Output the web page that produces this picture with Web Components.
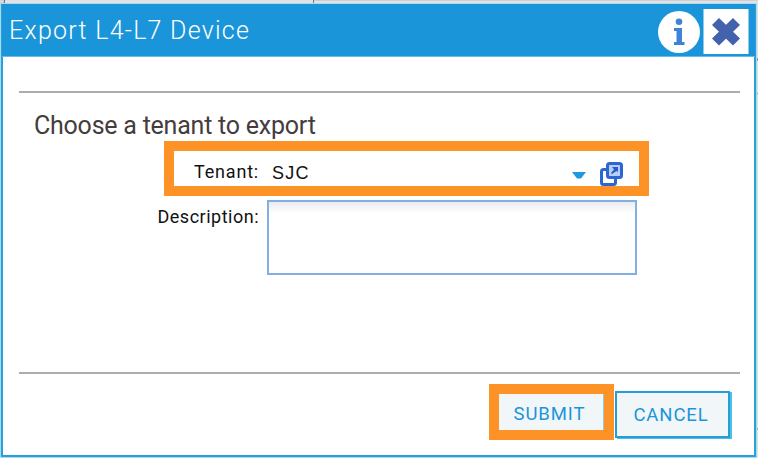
<!DOCTYPE html>
<html lang="en"><head><meta charset="utf-8"><title>Export L4-L7 Device</title>
<style>
html,body{margin:0;width:758px;height:458px;overflow:hidden;background:#e2e2e2;font-family:Roboto,"Liberation Sans",sans-serif}
</style></head><body>
<page-backdrop>
<export-dialog>
  <dialog-header slot="header">Export L4-L7 Device</dialog-header>
  <section-title>Choose a tenant to export</section-title>
  <tenant-field label="Tenant:">SJC</tenant-field>
  <description-field>Description:</description-field>
  <highlight-box slot="actions"><action-button>SUBMIT</action-button></highlight-box>
  <action-button slot="actions" raised>CANCEL</action-button>
</export-dialog>
</page-backdrop>
<script>
const define=(name,html)=>customElements.define(name,class extends HTMLElement{
  constructor(){super();this.attachShadow({mode:'open'}).innerHTML=html;
    const l=this.shadowRoot.querySelector('[data-label]');if(l)l.textContent=this.getAttribute('label');}
});
define('page-backdrop',`<style>
:host{display:block;position:relative;box-sizing:border-box;width:758px;height:458px;padding:4px 2px 1px 1px;background:#e2e2e2}
svg{position:absolute;inset:0}slot{position:relative}::slotted(*){position:relative}
</style><svg width="758" height="458"><path d="M0 0H4V3H0M314 0H758" fill="none" stroke="#bcbcbc"/><path d="M4.5 0V4M313.5 0V4" stroke="#777" /><path d="M0 38.5H2M0 182H2M757 59.5H758" stroke="#777" stroke-width="2"/><path d="M0 333H2M0 375H2M0 416H2M757 93.5H758M757 429H758" stroke="#79bde0" stroke-width="2"/><path d="M313 457.500h2m13 0h2m13 0h2m4 0h2m36 0h2" stroke="#888"/></svg><slot></slot>`);
define('export-dialog',`<style>
:host{display:flex;flex-direction:column;box-sizing:border-box;width:755px;height:453px;background:#fff;border:solid #2a9fd9;border-width:0 2px 2px;box-shadow:0 0 0 1px #a5dcf3}
.body{box-sizing:border-box;height:283px;margin:34px 14px 0 16px;border-top:2px solid #adacb0;border-bottom:2px solid #adacb0;padding-top:18px}
.foot{display:flex;align-items:flex-start;justify-content:flex-end;padding:10px 24px 0 0;gap:1px}
</style><slot name="header"></slot><div class="body"><slot></slot></div><div class="foot"><slot name="actions"></slot></div>`);
define('dialog-header',`<style>
:host{display:flex;flex:none;box-sizing:border-box;height:53px;margin:0 -1px;background:#1b95d9;border-bottom:1px solid #65bce8;color:#fff;padding:4px 6px 0 7px;justify-content:space-between}
.t{font-size:25px;line-height:46px;font-weight:300;letter-spacing:1.25px;white-space:nowrap}.icons{display:flex;gap:3px}
</style><span class="t"><slot></slot></span><div class="icons"><svg width="43" height="46"><circle cx="22" cy="24" r="21" fill="#fff"/><circle cx="22" cy="13.700" r="3.300" fill="#3e83d6"/><path d="M17 20H25V34H27.500V37H17V34H19.500V23H17Z" fill="#3e83d6"/></svg><svg width="46" height="46"><path d="M.5 1H45.500V46H.5Z" fill="#fff"/><path d="M12.500 13.500L33.500 34M33.500 13.500L12.500 34" stroke="#4262ad" stroke-width="10"/></svg></div>`);
define('section-title',`<style>:host{display:block;height:30px;padding-left:15px;font-size:25px;line-height:30px;color:#453c3d;letter-spacing:-.23px;white-space:nowrap}</style><slot></slot>`);
define('tenant-field',`<style>
:host{display:grid;grid-template-columns:87px 1fr 14px 37px;box-sizing:border-box;width:485px;height:55px;margin-left:145px;border:10px solid #fd9327;padding-right:16px;color:#111;font-size:18px;line-height:20px;white-space:nowrap}
.l{justify-self:end;margin:11px 2px 0 0;letter-spacing:.8px}.v{margin:12px 0 0 11px;font-family:"Liberation Sans",sans-serif;letter-spacing:1.3px}
svg:last-child{justify-self:end}
</style><span class="l" data-label></span><span class="v"><slot></slot></span><svg width="14" height="34"><path d="M0 21H14L9 27.500H5Z" fill="#1c9add"/></svg><svg width="23" height="35"><rect x="1.500" y="18.500" width="14" height="15" rx="2" fill="#fff" stroke="#2b66d4" stroke-width="3"/><rect x="7.500" y="12.500" width="14" height="14" rx="2" fill="#b7cef7" stroke="#2b66d4" stroke-width="3"/><path d="M12 16H18V21L16.500 20L12 23L11 22L14 18.500Z" fill="#285cc8"/></svg>`);
define('description-field',`<style>
:host{display:grid;grid-template-columns:240px 370px;column-gap:8px;color:#111;font-size:18px;line-height:20px;margin-top:4px}
span{justify-self:end;margin-top:7px;letter-spacing:.5px}div{box-sizing:border-box;height:75px;border:2px solid #82b0e0;background:linear-gradient(#e9ecf2,#fff 11px)}
</style><span><slot></slot></span><div></div>`);
define('highlight-box',`<style>:host{display:block;box-sizing:border-box;width:125px;height:56px;border:10px solid #fd9327}</style><slot></slot>`);
define('action-button',`<style>
:host{display:flex;align-items:center;justify-content:center;box-sizing:border-box;height:36px;background:#f1f6f9;color:#1b95d9;border-right:1px solid #8bcdec;font-size:18.500px;line-height:20px;letter-spacing:.9px;padding:4px 3px 0 0}
:host([raised]){width:115px;height:47px;margin-top:7px;border:2px solid #259ed7;box-shadow:2px 1px 0 #47bfe9;padding-top:0}
</style><slot></slot>`);
</script></body></html>
